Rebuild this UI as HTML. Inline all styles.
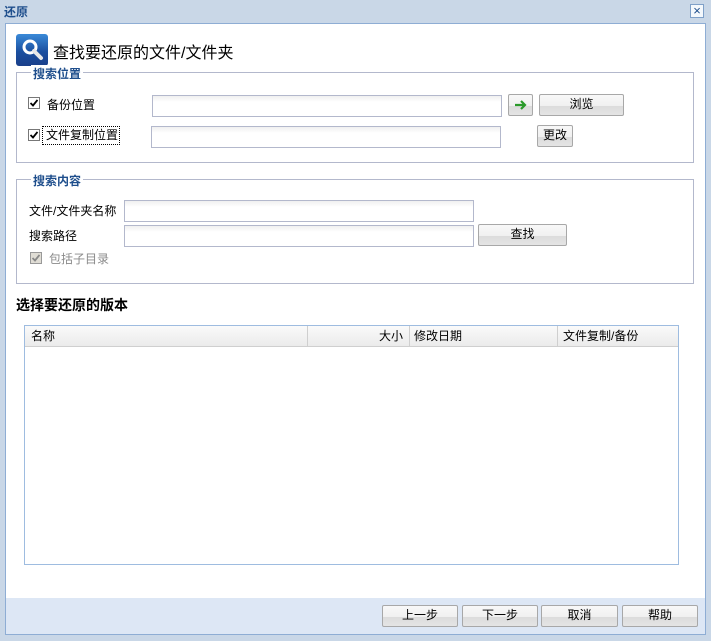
<!DOCTYPE html>
<html><head><meta charset="utf-8"><style>
*{box-sizing:border-box;margin:0;padding:0}
body{width:711px;height:641px;background:#c9d7e7;font-family:"Liberation Sans","Noto Sans CJK SC","WenQuanYi Zen Hei",sans-serif;font-size:12px;color:#000;position:relative;overflow:hidden}
.a{position:absolute}
.title{left:4px;top:3px;font-weight:bold;color:#1e4e8c;font-size:12px}
.close{left:690px;top:4px;width:14px;height:14px;border:1px solid #7fa0c8;background:#f4f8fc;color:#1e4e8c;font-size:13px;line-height:11px;text-align:center}
.win{left:5px;top:23px;width:701px;height:612px;border:1px solid #8eadd4;background:#fff}
.foot{left:6px;top:598px;width:699px;height:36px;background:#dde7f5}
.fs{border:1px solid #b3b8cc}
.leg{background:#fff;color:#1e4e8c;font-weight:bold;padding:0 2px;font-size:12px}
.inp{border:1px solid #b3b8cc;background:linear-gradient(#f0f0f0,#fff 6px)}
.btn{border:1px solid #a8a8a8;border-radius:2px;background:linear-gradient(#f8f8f8 0,#f0f0f0 55%,#dcdcdc 56%,#e4e4e4);text-align:center;line-height:19px;color:#000;font-size:12px}
.cb{width:12px;height:12px;border:1px solid #777;background:#fff}
.cb svg{position:absolute;left:1px;top:1px}
.th{top:326px;height:21px;line-height:21px;background:linear-gradient(#fafafa,#ebebeb);border-right:1px solid #cfcfcf;border-bottom:1px solid #cfcfcf;padding:0 6px}
</style></head><body>
<div class="a title">还原</div>
<div class="a close">×</div>
<div class="a win"></div>
<div class="a foot"></div>
<div class="a" style="left:16px;top:34px;width:32px;height:32px;border-radius:3px;background:linear-gradient(#3a8ad8,#1b4fa0 55%,#1a3f8a)">
<svg width="32" height="32"><circle cx="14" cy="13" r="6" fill="none" stroke="#fff" stroke-width="3"/><line x1="18" y1="17" x2="25" y2="24" stroke="#e8e8e8" stroke-width="4" stroke-linecap="round"/></svg></div>
<div class="a" style="left:53px;top:39px;font-size:16px">查找要还原的文件/文件夹</div>

<div class="a fs" style="left:16px;top:72px;width:678px;height:91px"></div>
<div class="a leg" style="left:31px;top:65px">搜索位置</div>
<div class="a cb" style="left:28px;top:97px"><svg width="8" height="8"><path d="M0.5 4 L3 6.5 L7.5 1" fill="none" stroke="#000" stroke-width="1.8"/></svg></div>
<div class="a" style="left:47px;top:96px">备份位置</div>
<div class="a inp" style="left:152px;top:95px;width:350px;height:22px"></div>
<div class="a btn" style="left:508px;top:94px;width:25px;height:22px"><svg width="14" height="12" style="margin-top:4px"><path d="M1 6 H11 M7 2 L11 6 L7 10" fill="none" stroke="#2a9a2a" stroke-width="2.2"/></svg></div>
<div class="a btn" style="left:539px;top:94px;width:85px;height:22px">浏览</div>
<div class="a cb" style="left:28px;top:129px"><svg width="8" height="8"><path d="M0.5 4 L3 6.5 L7.5 1" fill="none" stroke="#000" stroke-width="1.8"/></svg></div>
<div class="a" style="left:42px;top:126px;width:78px;height:19px;border:1px dotted #000;padding-left:3px;line-height:17px">文件复制位置</div>
<div class="a inp" style="left:151px;top:126px;width:350px;height:22px"></div>
<div class="a btn" style="left:537px;top:125px;width:36px;height:22px">更改</div>

<div class="a fs" style="left:16px;top:179px;width:678px;height:105px"></div>
<div class="a leg" style="left:31px;top:172px">搜索内容</div>
<div class="a" style="left:29px;top:202px">文件/文件夹名称</div>
<div class="a inp" style="left:124px;top:200px;width:350px;height:22px"></div>
<div class="a" style="left:29px;top:227px">搜索路径</div>
<div class="a inp" style="left:124px;top:225px;width:350px;height:22px"></div>
<div class="a btn" style="left:478px;top:224px;width:89px;height:22px">查找</div>
<div class="a cb" style="left:30px;top:252px;background:#e0ddd5;border-color:#999"><svg width="8" height="8"><path d="M0.5 4 L3 6.5 L7.5 1" fill="none" stroke="#888" stroke-width="1.8"/></svg></div>
<div class="a" style="left:49px;top:250px;color:#8a8a8a">包括子目录</div>

<div class="a" style="left:16px;top:295px;font-size:14px;font-weight:bold">选择要还原的版本</div>
<div class="a" style="left:24px;top:325px;width:655px;height:240px;border:1px solid #9ebce0;background:#fff"></div>
<div class="a th" style="left:25px;width:283px">名称</div>
<div class="a th" style="left:308px;width:102px;text-align:right">大小</div>
<div class="a th" style="left:410px;width:148px;padding-left:4px">修改日期</div>
<div class="a th" style="left:558px;width:120px;padding-left:5px;border-right:none">文件复制/备份</div>

<div class="a btn" style="left:382px;top:605px;width:76px;height:22px">上一步</div>
<div class="a btn" style="left:462px;top:605px;width:76px;height:22px">下一步</div>
<div class="a btn" style="left:541px;top:605px;width:77px;height:22px">取消</div>
<div class="a btn" style="left:622px;top:605px;width:76px;height:22px">帮助</div>
</body></html>
